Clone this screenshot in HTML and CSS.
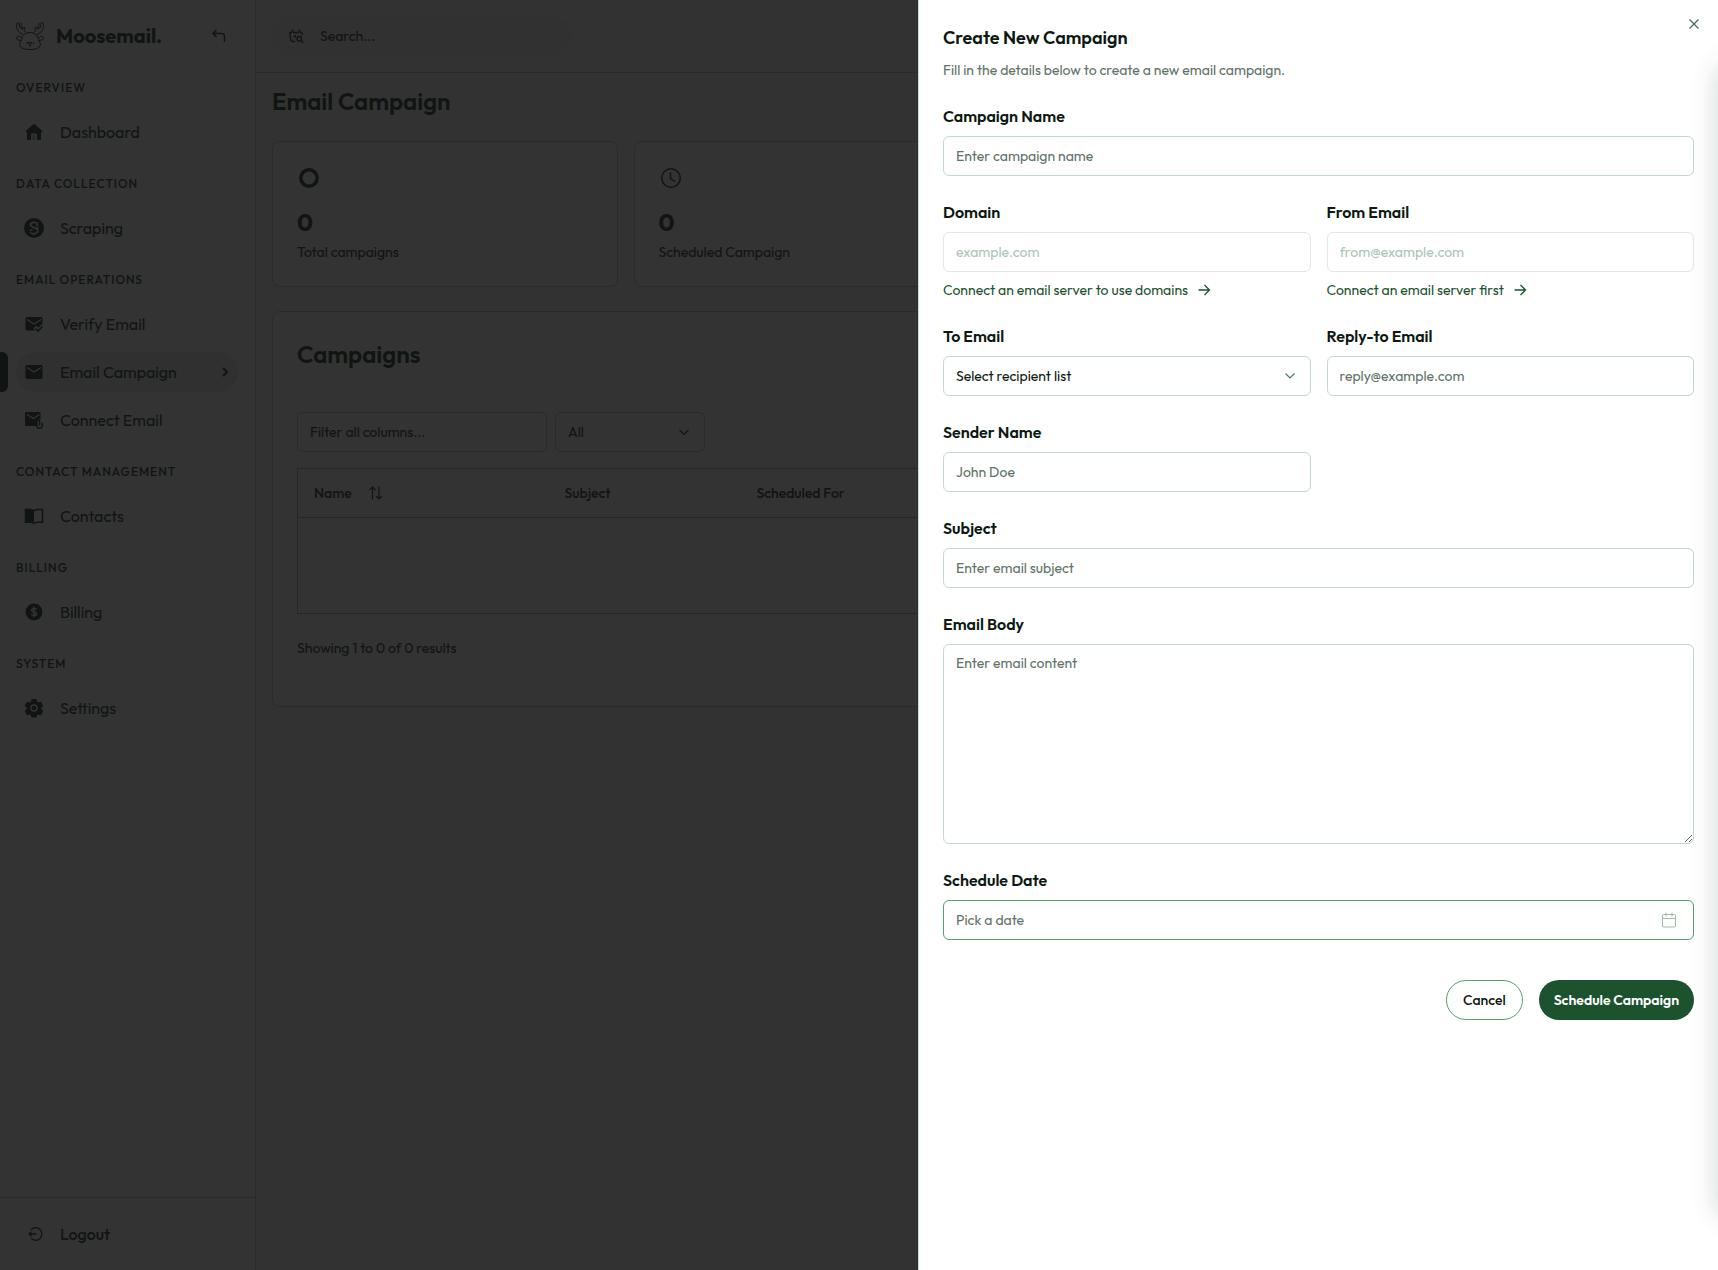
FILE: index.html
```html
<!DOCTYPE html>
<html lang="en">
<head>
<meta charset="utf-8">
<meta name="viewport" content="width=device-width, initial-scale=1">
<title>Moosemail - Email Campaign</title>
<link rel="stylesheet" href="styles.css">
</head>
<body>
<div class="app">
  <aside class="sidebar">
    <div class="brand">
      <svg class="logo" viewBox="0 0 28 28" fill="none" stroke="currentColor" stroke-width="1" stroke-linecap="round" stroke-linejoin="round">
        <path d="M7 12.500C3 11 .5 8 .5 4c0-2 .5-3.500 1.500-3.500S3.200 3 3.800 5.500M3.800 5.500c1 1 2 1.500 2.700 1.500M5 1.500c0 2 .5 3.500 1.500 5.500C7 5.500 7.800 4.800 8.500 5s.2 2-.5 3.500c1 .8 2 1.500 2.500 2"/>
        <path d="M21 12.500c4-1.500 6.500-4.500 6.500-8.500 0-2-.5-3.500-1.500-3.500S24.800 3 24.200 5.500M24.200 5.500c-1 1-2 1.500-2.700 1.500M23 1.500c0 2-.5 3.500-1.500 5.500-.5-1.500-1.300-2.200-2-2s-.2 2 .5 3.500c-1 .8-2 1.500-2.500 2"/>
        <path d="M14 10.500c-5 0-7.500 3-8.500 7-1 2.500-2.500 4-1.500 6.500 1.500 3 6 3.500 10 3.500s8.500-.5 10-3.500c1-2.500-.5-4-1.500-6.500-1-4-3.500-7-8.500-7z"/>
        <path d="M5.500 15.500C3 13.500.5 14 .5 16c0 1.500 2 2.500 4.500 2.500M22.500 15.500c2.500-2 5-1.500 5 .5 0 1.500-2 2.500-4.500 2.500"/>
        <path d="M12 20.500h4l-2 2.500zM14 23v1.500M10.500 21v.5M17.500 21v.5"/>
      </svg>
      <span class="brand-name">Moosemail.</span>
      <button class="icon-button" type="button" aria-label="Collapse sidebar">
        <svg width="16" height="16" viewBox="0 0 16 16" fill="none" stroke="currentColor" stroke-width="1.500"><path d="M5.500 2 2 5.500 5.500 9M2 5.500h8.500c1.700 0 3 1.300 3 3V14"/></svg>
      </button>
    </div>
    <nav class="nav">
      <section class="nav-group">
        <h2>Overview</h2>
        <a href="#"><svg viewBox="0 0 20 20" fill="currentColor"><path d="M9.300 2.200a1 1 0 0 1 1.400 0l7.400 6.500c.6.600.3 1.300-.4 1.300H17v6.500c0 1-.5 1.500-1.500 1.500H13v-5c0-1-.5-1.500-1.500-1.500h-3C7.500 11.500 7 12 7 13v5H4.500C3.500 18 3 17.500 3 16.500V10h-.7c-.7 0-1-.7-.4-1.300z"/><path d="M8.500 13h3v5h-3z" opacity=".35"/></svg><span>Dashboard</span></a>
      </section>
      <section class="nav-group">
        <h2>Data Collection</h2>
        <a href="#"><svg viewBox="0 0 20 20"><circle cx="10" cy="10" r="10" fill="currentColor"/><path d="M14 5.500C12 4 7 4 6.300 6.500 6 9.500 14 9.500 14 13c-.5 3-6 3-8 1.500M10 3v1.500M10 15.500V17M12 7.500l2-1M6 12.500l2.500-.5M12 10.500l2.500-1" fill="none" stroke="#fff" stroke-width="1.500"/></svg><span>Scraping</span></a>
      </section>
      <section class="nav-group">
        <h2>Email Operations</h2>
        <a href="#"><svg viewBox="0 0 20 20"><path d="M3 3h14a1.500 1.500 0 0 1 1.500 1.500V11L13 16.500H3A1.500 1.500 0 0 1 1.500 15V4.500A1.500 1.500 0 0 1 3 3z" fill="currentColor"/><path d="m3 5.500 7 4.500 7-4.500" fill="none" stroke="#fff" stroke-width="1.300"/><path d="m11 13 3 4 6-6" fill="none" stroke="#fff" stroke-width="4"/><path d="m11.500 14.500 2.500 2.500 4.500-4.500" fill="none" stroke="currentColor" stroke-width="1.700"/></svg><span>Verify Email</span></a>
        <a href="#" class="active" aria-current="page"><svg viewBox="0 0 20 20"><rect x="1.500" y="3" width="17" height="14" rx="1.500" fill="currentColor"/><path d="m3 5.500 7 4.500 7-4.500" fill="none" stroke="#fff" stroke-width="1.300"/></svg><span>Email Campaign</span><svg class="chevron" viewBox="0 0 16 16" fill="none" stroke="currentColor" stroke-width="2"><path d="m6 4 4 4-4 4"/></svg></a>
        <a href="#"><svg viewBox="0 0 20 20"><path d="M2 2h14.500v7.500H13V16H2a1 1 0 0 1-1-1V3a1 1 0 0 1 1-1z" fill="currentColor"/><path d="m3 4.500 6.500 4 6-4" fill="none" stroke="#fff" stroke-width="1.300"/><path d="M13 10.500v5.200a2.600 2.600 0 0 0 5.200 0v-3.200M15.600 15.500v-4.200a1.300 1.300 0 0 0-2.600 0" fill="none" stroke="currentColor" stroke-width="1.400"/></svg><span>Connect Email</span></a>
      </section>
      <section class="nav-group">
        <h2>Contact Management</h2>
        <a href="#"><svg viewBox="0 0 20 20"><path d="M1 3.500h8l1 .7v12.300l-1-.5H1z" fill="currentColor"/><path d="M1.500 3.500h6L10 4.800l2.500-1.300h6v12.700h-6L10 17.500l-2.500-1.300h-6z" fill="none" stroke="currentColor" stroke-width="1.500"/></svg><span>Contacts</span></a>
      </section>
      <section class="nav-group">
        <h2>Billing</h2>
        <a href="#"><svg viewBox="0 0 20 20"><circle cx="10" cy="10" r="8.500" fill="currentColor"/><path d="M12.700 7.500C12 6.300 7.500 6 7.500 8.300s5.200 1.200 5.200 3.500-4.400 2-5.400.5M10 4.700v10.600" fill="none" stroke="#fff" stroke-width="1.400"/></svg><span>Billing</span></a>
      </section>
      <section class="nav-group">
        <h2>System</h2>
        <a href="#"><svg viewBox="0 0 20 20"><path fill="currentColor" stroke="currentColor" stroke-linejoin="round" d="M7.800 1.500h4.400l.5 2.600 1.500.9 2.500-.9 2.200 3.800-2 1.700v1.800l2 1.700-2.200 3.800-2.500-.9-1.500.9-.5 2.100H7.800l-.5-2.100-1.500-.9-2.500.9-2.200-3.800 2-1.700V9.600l-2-1.700 2.200-3.800 2.500.9 1.500-.9z"/><circle cx="10" cy="10" r="3" fill="none" stroke="#fff" stroke-width="1.300"/></svg><span>Settings</span></a>
      </section>
    </nav>
    <div class="sidebar-footer">
      <button class="logout" type="button"><svg viewBox="0 0 20 20" fill="none" stroke="currentColor" stroke-width="1.300"><path d="M7 5.700a6.300 6.300 0 1 1 0 8.600M7.500 7.700 5 10l2.500 2.300M5 10h7.500"/></svg><span>Logout</span></button>
    </div>
  </aside>

  <div class="page">
    <header class="topbar">
      <label class="search">
        <svg width="16" height="16" viewBox="0 0 16 16" fill="none" stroke="currentColor" stroke-width="1.300"><path d="M7 13.500H4.800c-1.200 0-1.800-.6-2-1.700L2 6.500M14 6v1.500M5.300 1.500 3.800 4.300M10.700 1.500l1.500 2.800M5 4.500h6M3.800 4.500H2.500a1 1 0 0 0 0 2M12.200 4.500h1.300a1 1 0 0 1 .5 1.500M7.500 7v2.500M5.500 8.500h2"/><circle cx="11.300" cy="10.800" r="2.300"/><path d="m13 12.500 2.200 2.300"/></svg>
        <input type="search" placeholder="Search..." aria-label="Search">
      </label>
    </header>
    <main class="content">
      <h1>Email Campaign</h1>
      <div class="stats">
        <article class="card stat">
          <svg width="24" height="24" viewBox="0 0 24 24" fill="none" stroke="currentColor" stroke-width="3.500"><circle cx="12" cy="12" r="8.200"/></svg>
          <strong>0</strong>
          <span>Total campaigns</span>
        </article>
        <article class="card stat">
          <svg width="24" height="24" viewBox="0 0 24 24" fill="none" stroke="currentColor" stroke-width="1.500"><circle cx="12" cy="12" r="9.300"/><path d="M11.500 6.500v6l4.500 3"/></svg>
          <strong>0</strong>
          <span>Scheduled Campaign</span>
        </article>
      </div>
      <section class="card campaigns">
        <h2>Campaigns</h2>
        <div class="filters">
          <input class="control filter-text" type="text" placeholder="Filter all columns..." aria-label="Filter all columns">
          <div class="select filter-status">
            <select class="control" aria-label="Status"><option>All</option></select>
            <svg viewBox="0 0 16 16" fill="none" stroke="currentColor" stroke-width="1.200"><path d="m3.500 6 4.500 4.500L12.500 6"/></svg>
          </div>
        </div>
        <table>
          <thead>
            <tr>
              <th class="col-name" scope="col"><button class="sort" type="button">Name<svg width="16" height="16" viewBox="0 0 16 16" fill="none" stroke="currentColor" stroke-width="1.200"><path d="M4.500 14.500V2M1.500 5l3-3 3 3M11 1.500V14M8 11l3 3 3-3"/></svg></button></th>
              <th class="col-subject" scope="col">Subject</th>
              <th scope="col">Scheduled For</th>
            </tr>
          </thead>
          <tbody><tr><td colspan="3"></td></tr></tbody>
        </table>
        <p>Showing 1 to 0 of 0 results</p>
      </section>
    </main>
  </div>
</div>

<div class="backdrop"></div>

<div class="drawer" role="dialog" aria-labelledby="drawer-title">
  <button class="close" type="button" aria-label="Close"><svg width="16" height="16" viewBox="0 0 16 16" fill="none" stroke="currentColor" stroke-width="1.200"><path d="m3.500 3.500 9 9M12.500 3.500l-9 9"/></svg></button>
  <header class="drawer-head">
    <h2 id="drawer-title">Create New Campaign</h2>
    <p>Fill in the details below to create a new email campaign.</p>
  </header>
  <form class="form">
    <div class="field wide">
      <label for="name">Campaign Name</label>
      <input class="control" id="name" type="text" placeholder="Enter campaign name">
    </div>
    <div class="field">
      <label for="domain">Domain</label>
      <input class="control" id="domain" type="text" placeholder="example.com" disabled>
      <a class="hint" href="#">Connect an email server to use domains<svg width="16" height="16" viewBox="0 0 16 16" fill="none" stroke="currentColor" stroke-width="1.300"><path d="M2.500 8h11M8.500 3l5 5-5 5"/></svg></a>
    </div>
    <div class="field">
      <label for="from">From Email</label>
      <input class="control" id="from" type="email" placeholder="from@example.com" disabled>
      <a class="hint" href="#">Connect an email server first<svg width="16" height="16" viewBox="0 0 16 16" fill="none" stroke="currentColor" stroke-width="1.300"><path d="M2.500 8h11M8.500 3l5 5-5 5"/></svg></a>
    </div>
    <div class="field">
      <label for="to">To Email</label>
      <div class="select">
        <select class="control" id="to"><option>Select recipient list</option></select>
        <svg viewBox="0 0 16 16" fill="none" stroke="currentColor" stroke-width="1.200"><path d="m3.500 5.500 4.500 4.500 4.500-4.500"/></svg>
      </div>
    </div>
    <div class="field">
      <label for="reply">Reply-to Email</label>
      <input class="control" id="reply" type="email" placeholder="reply@example.com">
    </div>
    <div class="field start">
      <label for="sender">Sender Name</label>
      <input class="control" id="sender" type="text" placeholder="John Doe">
    </div>
    <div class="field wide">
      <label for="subject">Subject</label>
      <input class="control" id="subject" type="text" placeholder="Enter email subject">
    </div>
    <div class="field wide">
      <label for="body">Email Body</label>
      <textarea class="control" id="body" placeholder="Enter email content"></textarea>
    </div>
    <div class="field wide">
      <label for="date">Schedule Date</label>
      <button class="control date" id="date" type="button">Pick a date<svg width="16" height="16" viewBox="0 0 16 16" fill="none" stroke="currentColor" stroke-width="1"><rect x="1.500" y="2.500" width="13" height="12.500" rx="1"/><path d="M1.500 6.500h13M5 .5v4M11 .5v4"/></svg></button>
    </div>
    <div class="actions wide">
      <button class="button outline" type="button">Cancel</button>
      <button class="button solid" type="submit">Schedule Campaign</button>
    </div>
  </form>
</div>
</body>
</html>
```
FILE: styles.css
```css
:root {
  --ink: #0c1811;
  --soft-ink: #50695a;
  --muted: #607267;
  --green: #1c522d;
  --line: #c1dacb;
}

* { box-sizing: border-box; }

body {
  margin: 0;
  font-family: Outfit, Lato, "Noto Sans", sans-serif;
  font-size: 14px;
  line-height: 20px;
  color: var(--ink);
  background: #fff;
}

h1, h2, p { margin: 0; }
button, input, select, textarea { font: inherit; color: inherit; }
button { cursor: pointer; }
a { color: inherit; text-decoration: none; }
svg { display: block; flex: none; }

.app {
  display: flex;
  min-height: 100vh;
  color: var(--soft-ink);
}

/* Sidebar */
.sidebar {
  display: flex;
  flex-direction: column;
  flex: 0 0 256px;
  border-right: 1px solid var(--line);
}

.brand {
  display: flex;
  align-items: center;
  gap: 12px;
  height: 72px;
  padding: 0 28px 0 16px;
}
.logo { width: 28px; height: 28px; }
.brand-name { font-size: 20px; font-weight: 700; line-height: 28px; }
.icon-button {
  margin-left: auto;
  padding: 0;
  border: 0;
  background: none;
}

.nav {
  display: flex;
  flex-direction: column;
  gap: 24px;
  padding: 8px 17px 24px 16px;
}
.nav-group { display: flex; flex-direction: column; gap: 8px; }
.nav-group h2 {
  margin-bottom: 8px;
  font-size: 12px;
  font-weight: 500;
  line-height: 16px;
  letter-spacing: 1px;
  text-transform: uppercase;
}
.nav-group a, .logout {
  display: flex;
  align-items: center;
  gap: 16px;
  height: 40px;
  padding: 0 8px;
  border-radius: 20px;
  font-size: 16px;
  line-height: 24px;
}
.nav-group a svg, .logout svg { width: 20px; height: 20px; }
.nav-group .active { position: relative; background: #e8f0eb; }
.nav-group .active::before {
  content: "";
  position: absolute;
  left: -16px;
  width: 8px;
  height: 40px;
  border-radius: 0 6px 6px 0;
  background: var(--soft-ink);
}
.nav-group a .chevron { width: 16px; height: 16px; margin-left: auto; margin-right: -3px; }

.sidebar-footer {
  margin-top: auto;
  padding: 16px;
  border-top: 1px solid var(--line);
}
.logout { border: 0; background: none; font-weight: 500; }

/* Page */
.page { flex: 1; min-width: 0; background: #fafafa; }
.topbar {
  display: flex;
  align-items: center;
  height: 73px;
  padding: 0 16px;
  border-bottom: 1px solid var(--line);
}
.search {
  display: flex;
  align-items: center;
  gap: 16px;
  width: 300px;
  height: 40px;
  padding: 0 16px;
  border-radius: 20px;
  background: #f3f4f3;
}
.search input { flex: 1; min-width: 0; padding: 0; border: 0; outline: 0; background: none; }
.search input::placeholder { color: inherit; opacity: 1; }

.content { padding: 16px; }
h1, .campaigns h2 { font-size: 24px; font-weight: 600; line-height: 24px; }

.card {
  padding: 24px;
  border: 1px solid var(--line);
  border-radius: 8px;
  background: #fdfdfd;
}
.stats {
  display: grid;
  grid-template-columns: repeat(4, 1fr);
  gap: 16px;
  margin: 28px 0 24px;
}
.stat { display: flex; flex-direction: column; }
.stat strong { margin: 16px 0 4px; font-size: 24px; font-weight: 700; line-height: 32px; }

.campaigns h2 { line-height: 36px; }
.campaigns > p { margin: 24px 0; }
.filters { display: flex; gap: 8px; margin: 40px 0 16px; }
.app .control { background: transparent; color: inherit; }
.app .control::placeholder { color: inherit; }
.filter-text { max-width: 250px; }
.filter-status { width: 150px; }

table {
  width: 100%;
  table-layout: fixed;
  border-collapse: collapse;
  border: 1px solid #b3cdbf;
}
th { height: 49px; padding: 0 16px; border-bottom: 1px solid #b3cdbf; font-weight: 500; text-align: left; }
td { height: 96px; padding: 0; }
.col-name { width: 251px; }
.col-subject { width: 192px; }
.sort { display: flex; align-items: center; gap: 16px; padding: 0; border: 0; background: none; }

.backdrop { position: fixed; inset: 0; background: rgb(0 0 0 / 80%); }

/* Drawer */
.drawer {
  position: fixed;
  inset: 0 0 0 auto;
  width: 800px;
  max-width: 100%;
  padding: 24px;
  overflow: hidden;
  border-left: 1px solid var(--line);
  background: #fff;
}
.drawer::after {
  content: "";
  position: absolute;
  top: 64px;
  bottom: 52px;
  left: 100%;
  width: 48px;
  border-radius: 16px;
  box-shadow: 0 0 28px rgb(12 50 36 / 20%);
}
.close {
  position: absolute;
  top: 16px;
  right: 16px;
  padding: 0;
  border: 0;
  background: none;
  color: #456a52;
}
.drawer-head { display: grid; gap: 8px; margin-bottom: 24px; }
.drawer-head h2 { font-size: 18px; font-weight: 600; line-height: 28px; }
.drawer-head p { color: var(--muted); }

.form { display: grid; grid-template-columns: 1fr 1fr; gap: 24px 16px; }
.field { display: flex; flex-direction: column; gap: 8px; min-width: 0; }
.field label { font-size: 16px; font-weight: 600; line-height: 24px; }
.wide { grid-column: 1 / -1; }
.start { grid-column: 1; }

.control {
  display: block;
  width: 100%;
  height: 40px;
  padding: 0 12px;
  border: 1px solid var(--line);
  border-radius: 6px;
  background: #fff;
  appearance: none;
}
.control::placeholder { color: var(--muted); opacity: 1; }
.control:disabled { border-color: #e4e8e6; }
.control:disabled::placeholder { color: #adc4b6; }
textarea.control { height: 200px; padding: 8px 12px; }

.select { position: relative; }
.select svg {
  position: absolute;
  top: 12px;
  right: 13px;
  width: 16px;
  height: 16px;
  color: #4c7c5d;
  pointer-events: none;
}
.app .select svg { color: inherit; }

.hint { display: flex; align-items: center; gap: 8px; color: var(--green); }
.date {
  display: flex;
  align-items: center;
  justify-content: space-between;
  padding-right: 16px;
  border-color: #559f6d;
  color: var(--muted);
}
.date svg { color: #a4b9ac; }

.actions { display: flex; justify-content: flex-end; gap: 16px; margin-top: 16px; }
.button { height: 40px; padding: 0 16px; border: 1px solid #559f6d; border-radius: 20px; font-weight: 500; }
.outline { background: #fff; }
.solid { border: 0; padding: 0 15px; background: var(--green); color: #fff; font-weight: 600; }
```
